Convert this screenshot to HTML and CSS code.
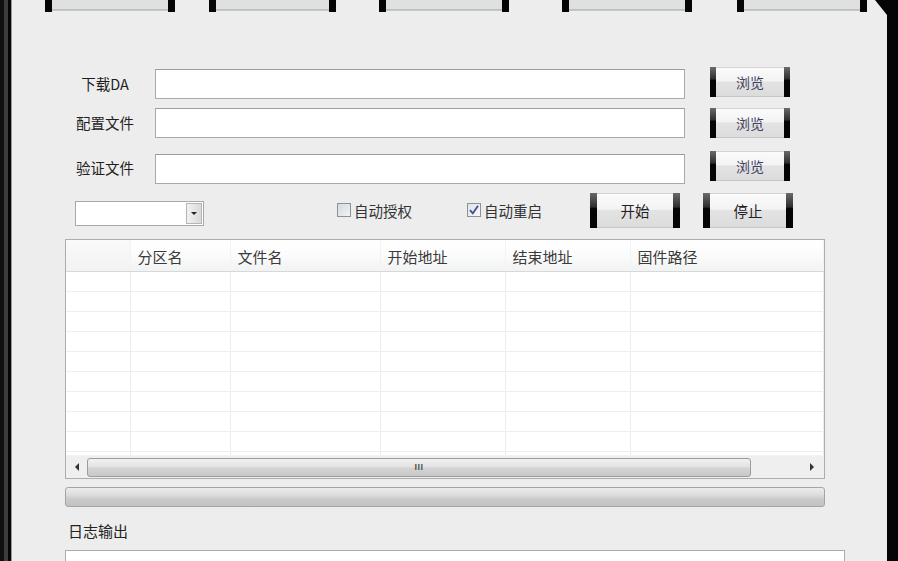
FILE: index.html
```html
<!DOCTYPE html>
<html lang="zh">
<head>
<meta charset="utf-8">
<title>下载工具</title>
<link rel="stylesheet" href="styles.css">
</head>
<body>
<div class="window">
  <div class="frame-left"></div>
  <div class="content">
    <div class="tabs">
      <div class="tab tab-1"></div>
      <div class="tab tab-2"></div>
      <div class="tab tab-3"></div>
      <div class="tab tab-4"></div>
      <div class="tab tab-5"></div>
    </div>

    <div class="form">
      <div class="row row-1">
        <div class="label">下载DA</div>
        <div class="input"></div>
        <div class="btn browse">浏览</div>
      </div>
      <div class="row row-2">
        <div class="label">配置文件</div>
        <div class="input"></div>
        <div class="btn browse">浏览</div>
      </div>
      <div class="row row-3">
        <div class="label">验证文件</div>
        <div class="input"></div>
        <div class="btn browse">浏览</div>
      </div>
      <div class="row row-4">
        <div class="combo">
          <div class="combo-field"></div>
          <div class="combo-btn"><span class="arrow-down"></span></div>
        </div>
        <label class="check check-1"><span class="box"></span>自动授权</label>
        <label class="check check-2"><span class="box checked"><svg viewBox="0 0 12 12" width="12" height="12"><path d="M2 6.2 L4.8 9.4 L10 1.8" fill="none" stroke="#3d4f8a" stroke-width="1.8"/></svg></span>自动重启</label>
        <div class="btn action">开始</div>
        <div class="btn action stop">停止</div>
      </div>
    </div>

    <div class="grid">
      <div class="grid-view">
        <table>
          <colgroup>
            <col class="c0"><col class="c1"><col class="c2"><col class="c3"><col class="c4"><col class="c5">
          </colgroup>
          <thead>
            <tr><th></th><th>分区名</th><th>文件名</th><th>开始地址</th><th>结束地址</th><th>固件路径</th></tr>
          </thead>
          <tbody>
            <tr><td></td><td></td><td></td><td></td><td></td><td></td></tr>
            <tr><td></td><td></td><td></td><td></td><td></td><td></td></tr>
            <tr><td></td><td></td><td></td><td></td><td></td><td></td></tr>
            <tr><td></td><td></td><td></td><td></td><td></td><td></td></tr>
            <tr><td></td><td></td><td></td><td></td><td></td><td></td></tr>
            <tr><td></td><td></td><td></td><td></td><td></td><td></td></tr>
            <tr><td></td><td></td><td></td><td></td><td></td><td></td></tr>
            <tr><td></td><td></td><td></td><td></td><td></td><td></td></tr>
            <tr><td></td><td></td><td></td><td></td><td></td><td></td></tr>
            <tr><td></td><td></td><td></td><td></td><td></td><td></td></tr>
          </tbody>
        </table>
      </div>
      <div class="hscroll">
        <div class="arrow-cell"><span class="arrow-left"></span></div>
        <div class="thumb"><span class="grip">III</span></div>
        <div class="track-rest"><span class="arrow-right"></span></div>
      </div>
    </div>

    <div class="progress"></div>

    <div class="log-label">日志输出</div>
    <div class="log"></div>
  </div>
  <div class="frame-right"></div>
</div>
</body>
</html>
```

FILE: styles.css
```css
* { box-sizing: border-box; }

html, body {
  margin: 0;
  padding: 0;
  width: 898px;
  height: 561px;
  overflow: hidden;
  background: #ededed;
  font-family: "Noto Sans CJK SC", "Noto Sans", sans-serif;
  color: #222;
}

.window {
  display: flex;
  width: 898px;
  height: 561px;
}

.frame-left {
  width: 12px;
  flex: none;
  background: linear-gradient(to right, #101010 0 4px, #3c3c3c 4px 8px, #060606 8px 11px, #9a9a9a 11px 12px);
}

.frame-right {
  width: 11px;
  flex: none;
  background: #050505;
}

.content {
  flex: 1;
  position: relative;
  background: #ededed;
  overflow: hidden;
}

.content::after {
  content: "";
  position: absolute;
  top: 0;
  right: 0;
  width: 12px;
  height: 15px;
  background: #050505;
  clip-path: polygon(0 0, 100% 0, 100% 100%);
}

/* top tab buttons (cut off) */
.tabs {
  display: flex;
  align-items: flex-end;
  height: 12px;
  overflow: hidden;
}

.tab {
  height: 30px;
  flex: none;
  border-left: 7px solid #050505;
  border-right: 7px solid #050505;
  background: linear-gradient(to bottom, #dfe1e0 0, #dfe1e0 27px, #b9bbba 27px, #c9cbca 29px, #ededed 29px);
}
.tab-1 { margin-left: 33px; width: 130px; }
.tab-2 { margin-left: 34px; width: 127px; }
.tab-3 { margin-left: 43px; width: 130px; }
.tab-4 { margin-left: 53px; width: 130px; }
.tab-5 { margin-left: 45px; width: 130px; }

/* form */
.form {
  padding-left: 63px;
}

.row {
  display: flex;
  align-items: flex-start;
}

.row-1 { margin-top: 55px; }
.row-2 { margin-top: 9px; }
.row-3 { margin-top: 13px; }
.row-4 { margin-top: 9px; }

.label {
  width: 60px;
  height: 30px;
  line-height: 30px;
  text-align: center;
  font-size: 14.5px;
  color: #1e1e1e;
  margin-right: 20px;
  white-space: nowrap;
}

.row-1 .label { margin-top: 2px; }
.row-3 .label { margin-top: 2px; }

.input {
  width: 530px;
  height: 30px;
  background: #fff;
  border: 1px solid #a9a9a9;
  border-top-color: #9c9c9c;
}

.row-1 .input { margin-top: 2px; }
.row-3 .input { margin-top: 3px; }

.btn {
  position: relative;
  flex: none;
  display: flex;
  align-items: center;
  justify-content: center;
  font-size: 14px;
  color: #3f4260;
  background: linear-gradient(to bottom, #fbfbfb 0%, #f3f3f3 46%, #e3e3e3 50%, #dcdcdc 100%);
  border-top: 1px solid #d4d4d4;
  border-bottom: 1px solid #c6c6c6;
}

.btn::before,
.btn::after {
  content: "";
  position: absolute;
  top: -1px;
  bottom: -1px;
  width: 6px;
  background: linear-gradient(to bottom, #6a6a6a 0%, #2e2e2e 40%, #050505 44%, #050505 100%);
}
.btn::before { left: 0; }
.btn::after { right: 0; }

.browse {
  width: 80px;
  height: 30px;
  margin-left: 25px;
}

/* row 4 */
.combo {
  display: flex;
  width: 129px;
  height: 25px;
  margin-top: 8px;
  border: 1px solid #a9a9a9;
  background: #fff;
}

.combo-field { flex: 1; }

.combo-btn {
  width: 16px;
  margin: 1px;
  display: flex;
  align-items: center;
  justify-content: center;
  border: 1px solid #b5b5b5;
  background: linear-gradient(to right, #f2f2f2, #d9d9d9);
}

.arrow-down {
  width: 0;
  height: 0;
  border-left: 3px solid transparent;
  border-right: 3px solid transparent;
  border-top: 3px solid #222;
}

.check {
  display: flex;
  align-items: center;
  gap: 3px;
  height: 20px;
  margin-top: 7px;
  font-size: 14.5px;
  color: #333;
  white-space: nowrap;
}

.check-1 { margin-left: 133px; width: 130px; }
.check-2 { width: 123px; }

.box {
  width: 14px;
  height: 14px;
  flex: none;
  border: 1px solid #8f9295;
  background: linear-gradient(135deg, #d3dae2, #f1f3f6);
  display: flex;
  align-items: center;
  justify-content: center;
}

.box.checked {
  background: linear-gradient(135deg, #dfe3e8, #f6f7f8);
}

.action {
  width: 90px;
  height: 35px;
  font-size: 14.5px;
  color: #222;
}

.action::before,
.action::after { width: 7px; }

.stop { margin-left: 23px; }

/* data grid */
.grid {
  margin-left: 53px;
  margin-top: 11px;
  width: 760px;
  height: 240px;
  border: 1px solid #adadad;
  background: #fff;
  display: flex;
  flex-direction: column;
}

.grid-view {
  height: 215px;
  overflow: hidden;
}

table {
  border-collapse: collapse;
  table-layout: fixed;
  width: 757px;
}

.c0 { width: 64px; }
.c1 { width: 100px; }
.c2 { width: 150px; }
.c3 { width: 125px; }
.c4 { width: 125px; }
.c5 { width: 193px; }

th {
  height: 31px;
  padding: 3px 0 0 7px;
  text-align: left;
  font-weight: normal;
  font-size: 15px;
  color: #3a3a3a;
  background: linear-gradient(to bottom, #ffffff 0%, #fbfbfb 50%, #f1f2f2 100%);
  border-bottom: 1px solid #d8d8d8;
  border-right: 1px solid #f3f3f3;
  white-space: nowrap;
}

th:first-child { background: linear-gradient(to bottom, #fafafa 0%, #f2f2f2 100%); }

td {
  height: 20px;
  padding: 0;
  border-right: 1px solid #ececec;
  border-bottom: 1px solid #efefef;
}

.hscroll {
  height: 23px;
  display: flex;
  align-items: center;
  background: #efefef;
  border-top: 1px solid #f2f2f2;
}

.arrow-cell {
  width: 21px;
  height: 100%;
  display: flex;
  align-items: center;
  justify-content: center;
}

.arrow-left {
  width: 0; height: 0;
  border-top: 4px solid transparent;
  border-bottom: 4px solid transparent;
  border-right: 4px solid #333;
}

.thumb {
  width: 664px;
  height: 19px;
  border: 1px solid #9c9c9c;
  border-radius: 3px;
  background: linear-gradient(to bottom, #f1f1f1 0%, #e3e3e3 45%, #d3d3d3 55%, #c9c9c9 100%);
  display: flex;
  align-items: center;
  justify-content: center;
}

.grip {
  font-family: "Liberation Sans", sans-serif;
  font-size: 9px;
  font-weight: bold;
  letter-spacing: 0.5px;
  color: #555;
  line-height: 1;
}

.track-rest {
  flex: 1;
  height: 100%;
  display: flex;
  align-items: center;
  justify-content: flex-end;
  padding-right: 10px;
}

.arrow-right {
  width: 0; height: 0;
  border-top: 4px solid transparent;
  border-bottom: 4px solid transparent;
  border-left: 4px solid #333;
}

.progress {
  margin-left: 53px;
  margin-top: 8px;
  width: 760px;
  height: 20px;
  border: 1px solid #a4a4a4;
  border-radius: 3px;
  background: linear-gradient(to bottom, #ececec 0%, #dcdcdc 40%, #cbcbcb 60%, #c2c2c2 100%);
}

.log-label {
  margin-left: 56px;
  margin-top: 12px;
  height: 24px;
  line-height: 24px;
  font-size: 15px;
  color: #222;
}

.log {
  margin-left: 53px;
  margin-top: 7px;
  width: 780px;
  height: 40px;
  background: #fff;
  border: 1px solid #adadad;
}
```
